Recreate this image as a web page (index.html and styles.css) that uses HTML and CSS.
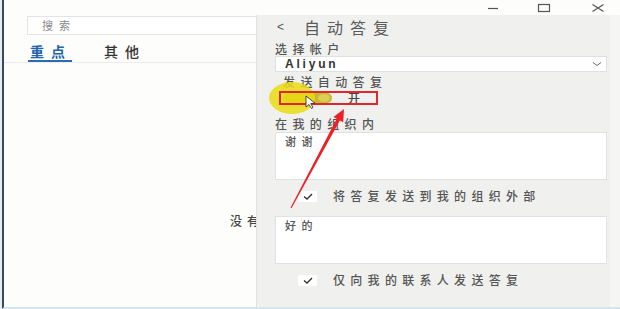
FILE: index.html
```html
<!DOCTYPE html>
<html lang="zh-CN">
<head>
<meta charset="utf-8">
<title>自动答复</title>
<link rel="stylesheet" href="styles.css">
</head>
<body>
<div class="window">
  <div class="titlebar">
    <span class="winbtn min"><svg width="12" height="10" viewBox="0 0 12 10"><path d="M1 5.5h10" stroke="#555" stroke-width="1.2"/></svg></span>
    <span class="winbtn max"><svg width="14" height="10" viewBox="0 0 14 10"><rect x="1.5" y="1.5" width="11" height="7" fill="none" stroke="#555" stroke-width="1.2"/></svg></span>
    <span class="winbtn close"><svg width="14" height="10" viewBox="0 0 14 10"><path d="M1.5 1.5l11 7M12.5 1.5l-11 7" stroke="#555" stroke-width="1.2"/></svg></span>
  </div>
  <div class="main">
    <div class="search">搜索</div>
    <div class="tabs">
      <span class="tab active">重点</span>
      <span class="tab">其他</span>
    </div>
    <div class="empty">没有</div>
  </div>

  <aside class="panel">
    <div class="panel-head">
      <span class="back">&lt;</span>
      <span class="title">自动答复</span>
    </div>
    <div class="label">选择帐户</div>
    <div class="select">
      <span class="select-text">Aliyun</span>
      <svg class="chev" width="10" height="6" viewBox="0 0 10 6"><path d="M1 1.5l4 3 4-3" fill="none" stroke="#666" stroke-width="1"/></svg>
    </div>
    <div class="label sub">发送自动答复</div>
    <div class="toggle-row">
      <span class="track"><span class="knob"></span></span>
      <span class="toggle-text">开</span>
    </div>
    <div class="label org">在我的组织内</div>
    <div class="textarea">谢谢</div>
    <div class="check-row">
      <span class="checkbox"><svg width="14" height="9" viewBox="0 0 14 9"><path d="M3 4.5l3 2.5 5-5" fill="none" stroke="#333" stroke-width="1.4"/></svg></span>
      <span class="check-label">将答复发送到我的组织外部</span>
    </div>
    <div class="textarea second">好的</div>
    <div class="check-row">
      <span class="checkbox"><svg width="14" height="9" viewBox="0 0 14 9"><path d="M3 4.5l3 2.5 5-5" fill="none" stroke="#333" stroke-width="1.4"/></svg></span>
      <span class="check-label">仅向我的联系人发送答复</span>
    </div>
  </aside>

  <svg class="annot" width="620" height="309" viewBox="0 0 620 309">
    <ellipse cx="292" cy="98" rx="23" ry="16" fill="rgba(236,218,18,0.85)"/>
    <rect x="280" y="92" width="97" height="12" fill="none" stroke="#e3262c" stroke-width="2"/>
    <polygon points="290.5,207.7 336.7,118.8 333.5,117 344,109 343.2,122.2 339.9,120.4 291.5,208.3" fill="#ec2127"/>
    <path d="M306 96 L306 107 L309 104.5 L311.5 108.5 L313 107.5 L310.8 103.6 L315 103.2 Z" fill="#fff" stroke="#222" stroke-width="0.8"/>
  </svg>
</div>
</body>
</html>
```
FILE: styles.css
```css
* { box-sizing: border-box; }
html, body { margin: 0; padding: 0; }
body {
  width: 620px;
  height: 309px;
  overflow: hidden;
  background: #e9ecef;
  font-family: "Noto Sans CJK SC", "Noto Sans", sans-serif;
  color: #555;
}
.window {
  position: relative;
  margin-left: 2px;
  width: 618px;
  height: 309px;
  background: #fdfdfb;
  border-left: 2px solid #3a4860;
  border-bottom: 2px solid #d3e6ef;
}
.titlebar {
  height: 15px;
  display: flex;
  justify-content: flex-end;
  align-items: center;
  padding-right: 15px;
}
.winbtn { display: flex; align-items: center; justify-content: center; }
.winbtn.min { margin-right: 38px; }
.winbtn.max { margin-right: 40px; }

.main {
  width: 252px;
  overflow: hidden;
  padding-left: 23px;
  padding-top: 1px;
}
.search {
  width: 300px;
  height: 19px;
  border: 1px solid #e4e4e4;
  background: #fff;
  font-size: 11px;
  letter-spacing: 6px;
  line-height: 17px;
  padding-left: 14px;
  color: #8a8a8a;
}
.tabs {
  display: flex;
  gap: 30px;
  margin-top: 7px;
  height: 21px;
  border-bottom: 1px solid #ececec;
  width: 600px;
  margin-left: -23px;
  padding-left: 24px;
}
.tab {
  font-size: 14px;
  letter-spacing: 7px;
  line-height: 18px;
  color: #333;
  font-weight: 500;
  height: 20px;
  padding-left: 2px;
}
.tab.active {
  color: #2062ab;
  font-weight: 700;
  border-bottom: 2px solid #2a6db5;
  width: 44px;
}
.empty {
  margin-top: 150px;
  padding-left: 203px;
  font-size: 12px;
  letter-spacing: 5px;
  color: #444;
  font-weight: 500;
  line-height: 16px;
  white-space: nowrap;
}

.panel {
  position: absolute;
  left: 252px;
  top: 15px;
  width: 356px;
  height: 292px;
  background: #f0f0ee;
  border-left: 1px solid #e2e2e0;
  padding: 0 5px 0 18px;
}
.window::after {
  content: "";
  position: absolute;
  left: 606px;
  top: 15px;
  width: 10px;
  height: 292px;
  background: #f5f6f4;
}
.panel-head {
  height: 24px;
  display: flex;
  align-items: center;
}
.back {
  font-family: "Liberation Sans", sans-serif;
  font-size: 12px;
  color: #555;
  margin-left: 2px;
  width: 27px;
}
.title {
  font-size: 16px;
  letter-spacing: 7px;
  color: #5a5a5a;
}
.label {
  margin-top: 2px;
  height: 15px;
  font-size: 12px;
  letter-spacing: 5.4px;
  line-height: 15px;
  color: #555;
  font-weight: 500;
}
.label.sub {
  margin-top: 2px;
  height: 16px;
  padding-left: 8px;
}
.label.org {
  margin-top: 10px;
  height: 17px;
  line-height: 17px;
}
.select {
  height: 16px;
  background: #fff;
  border: 1px solid #e0e0e0;
  display: flex;
  align-items: center;
  justify-content: space-between;
  padding: 0 4px 0 9px;
}
.select-text {
  font-family: "Liberation Sans", sans-serif;
  font-size: 12px;
  letter-spacing: 2.8px;
  color: #333;
  font-weight: 700;
}
.toggle-row {
  margin-top: 1px;
  height: 14px;
  display: flex;
  align-items: center;
  padding-left: 8px;
  gap: 16px;
}
.track {
  width: 49px;
  height: 10px;
  border-radius: 5px;
  background: #c8b92e;
  display: flex;
  justify-content: flex-end;
  align-items: center;
  padding-right: 2px;
}
.knob {
  width: 12px;
  height: 8px;
  border-radius: 50%;
  background: #dccf55;
}
.toggle-text {
  font-size: 12px;
  color: #444;
  font-weight: 500;
  line-height: 14px;
}
.textarea {
  height: 48px;
  background: #fff;
  border: 1px solid #e2e2e2;
  font-size: 11px;
  letter-spacing: 5.5px;
  line-height: 14px;
  padding: 1px 0 0 9px;
  color: #555;
  font-weight: 500;
}
.textarea.second { margin-top: 10px; }
.check-row {
  margin-top: 6px;
  height: 20px;
  display: flex;
  align-items: center;
  padding-left: 23px;
  gap: 16px;
}
.checkbox {
  width: 19px;
  height: 11px;
  background: #fff;
  display: flex;
  align-items: center;
  justify-content: center;
}
.check-label {
  font-size: 12px;
  letter-spacing: 5.3px;
  color: #555;
  font-weight: 500;
  line-height: 16px;
}
.annot {
  position: absolute;
  left: -4px;
  top: 0;
  pointer-events: none;
}
```
